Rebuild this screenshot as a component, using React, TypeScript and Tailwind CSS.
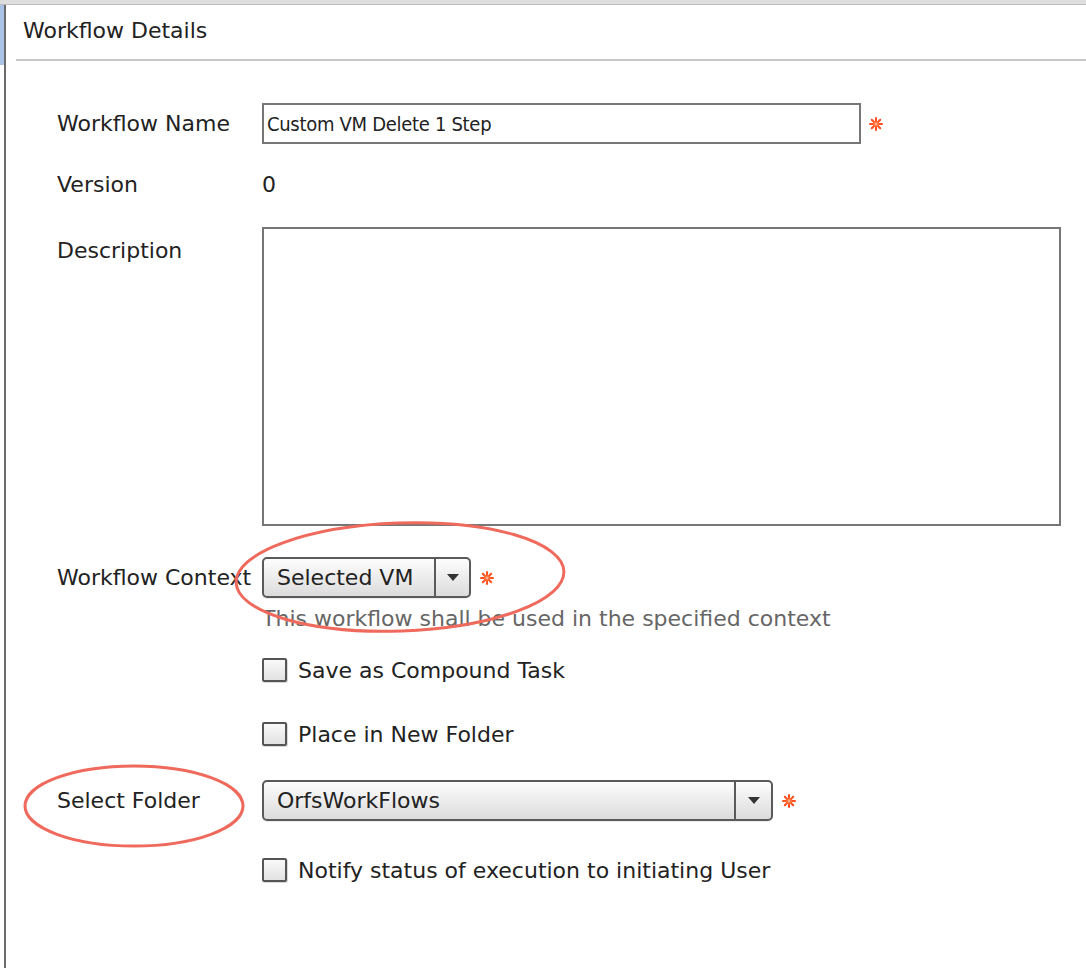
import React from "react"

const label = "font-['DejaVu_Sans',sans-serif] text-[22px] text-[#222]"
const inputFont =
  "font-['DejaVu_Sans_Condensed','Liberation_Sans',sans-serif] text-[20px] tracking-[-0.3px] text-[#222]"

function Req() {
  return (
    <svg width="14" height="14" viewBox="0 0 14 14" className="shrink-0">
      <g stroke="#ff4f1c" strokeWidth="2" strokeLinecap="round">
        <line x1="7" y1="1" x2="7" y2="13" />
        <line x1="1" y1="7" x2="13" y2="7" />
        <line x1="2.8" y1="2.8" x2="11.2" y2="11.2" />
        <line x1="11.2" y1="2.8" x2="2.8" y2="11.2" />
      </g>
      <circle cx="7" cy="7" r="3.2" fill="#ff6a35" />
      <circle cx="7" cy="7" r="1.4" fill="#ffb08a" />
    </svg>
  )
}

function Select({ value, width, divider }: { value: string; width: string; divider: string }) {
  return (
    <div
      className={`flex h-[41px] ${width} items-center rounded-[5px] border-2 border-[#5a5a5a] bg-gradient-to-b from-[#fdfdfd] to-[#dcdcdc] shadow-[0_1px_1px_rgba(0,0,0,0.08)]`}
    >
      <span className={`${label} flex-1 pl-[13px]`}>{value}</span>
      <div className={`flex h-full ${divider} items-center justify-center border-l-2 border-[#5a5a5a]`}>
        <svg width="12" height="7" viewBox="0 0 12 7">
          <polygon points="0,0 12,0 6,7" fill="#333" />
        </svg>
      </div>
    </div>
  )
}

function Check({ text }: { text: string }) {
  return (
    <div className="flex h-[26px] items-center gap-[11px]">
      <div className="h-[24px] w-[25px] shrink-0 rounded-[2px] border-2 border-[#555] bg-gradient-to-b from-[#fafafa] to-[#e2e2e2] shadow-[1px_1px_0_#dadada]" />
      <span className={label}>{text}</span>
    </div>
  )
}

export default function App() {
  return (
    <div className="relative h-[968px] w-[1086px] overflow-hidden bg-white">
      {/* top chrome */}
      <div className="h-[4px] bg-[#dedede]" />
      <div className="h-[1px] bg-[#bdbdbd]" />
      <div className="flex h-[963px]">
        <div className="w-[4px] shrink-0">
          <div className="h-[60px] bg-[#a9c3e6]" />
        </div>
        <div className="w-[2px] shrink-0 bg-[#6b6b6b]" />
        <div className="flex-1">
          <div className="flex h-[54px] items-center pb-[4px] pl-[17px]">
            <span className={label}>Workflow Details</span>
          </div>
          <div className="ml-[10px] h-[2px] bg-[#c8c8c8]" />

          <div className="pl-[51px] pt-[42px]">
            <div className="flex h-[41px] items-center">
              <div className={`w-[205px] ${label}`}>Workflow Name</div>
              <div className={`flex h-[41px] w-[599px] items-center border-2 border-[#777] px-[3px] pt-[1px] ${inputFont}`}>
                Custom VM Delete 1 Step
              </div>
              <div className="ml-[8px]">
                <Req />
              </div>
            </div>

            <div className="mt-[20px] flex h-[40px] items-center">
              <div className={`w-[205px] ${label}`}>Version</div>
              <div className={label}>0</div>
            </div>

            <div className="mt-[23px] flex">
              <div className={`w-[205px] pt-[7px] ${label}`}>Description</div>
              <div className="h-[299px] w-[799px] border-2 border-[#777]" />
            </div>

            <div className="mt-[31px] flex h-[41px] items-center">
              <div className={`w-[205px] ${label}`}>Workflow Context</div>
              <Select value="Selected VM" width="w-[209px]" divider="w-[35px]" />
              <div className="ml-[9px]">
                <Req />
              </div>
            </div>

            <div className="ml-[205px] mt-[7px] flex h-[26px] items-center">
              <span className="font-['DejaVu_Sans',sans-serif] text-[22px] text-[#666]">
                This workflow shall be used in the specified context
              </span>
            </div>

            <div className="ml-[205px] mt-[26px]">
              <Check text="Save as Compound Task" />
            </div>
            <div className="ml-[205px] mt-[38px]">
              <Check text="Place in New Folder" />
            </div>

            <div className="mt-[33px] flex h-[41px] items-center">
              <div className={`w-[205px] ${label}`}>Select Folder</div>
              <Select value="OrfsWorkFlows" width="w-[511px]" divider="w-[37px]" />
              <div className="ml-[9px]">
                <Req />
              </div>
            </div>

            <div className="ml-[205px] mt-[36px]">
              <Check text="Notify status of execution to initiating User" />
            </div>
          </div>
        </div>
      </div>

      {/* annotation circles */}
      <svg className="pointer-events-none absolute left-0 top-0" width="1086" height="968">
        <ellipse cx="400" cy="577" rx="164" ry="54" fill="none" stroke="#ef6a5c" strokeWidth="3" transform="rotate(-2 400 577)" />
        <ellipse cx="134" cy="806" rx="109" ry="40" fill="none" stroke="#ef6a5c" strokeWidth="3" />
      </svg>
    </div>
  )
}
